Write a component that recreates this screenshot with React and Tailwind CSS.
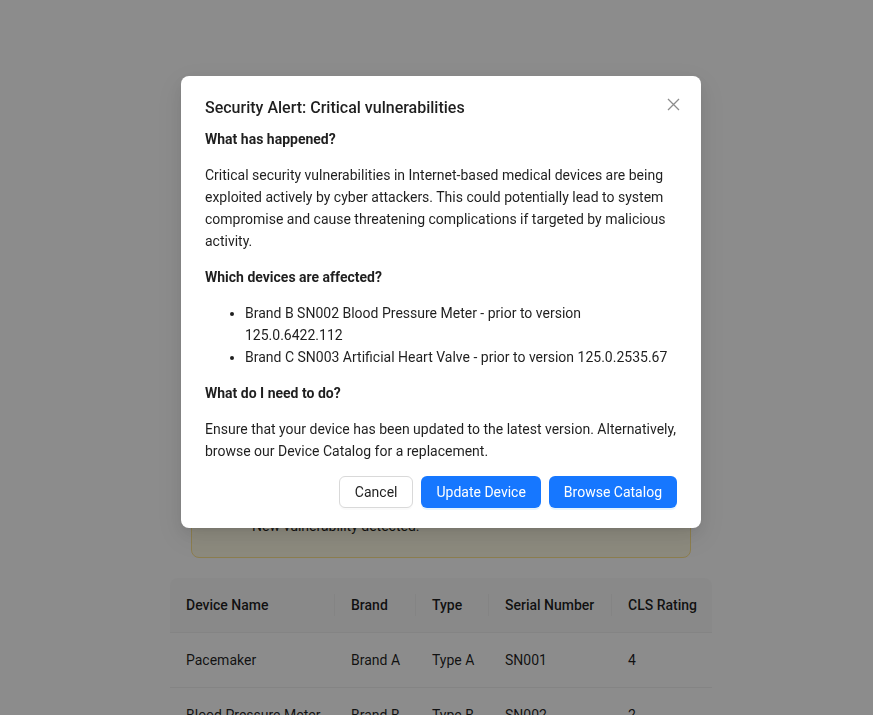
import React from 'react';

const columns = ['Device Name', 'Brand', 'Type', 'Serial Number', 'CLS Rating'];
const colWidths = ['w-[165px]', 'w-[81px]', 'w-[73px]', 'w-[123px]', 'w-[100px]'];

const rows = [
  ['Pacemaker', 'Brand A', 'Type A', 'SN001', '4'],
  ['Blood Pressure Meter', 'Brand B', 'Type B', 'SN002', '2'],
  ['Artificial Heart Valve', 'Brand C', 'Type C', 'SN003', '3'],
];

const font = { fontFamily: '"Segoe UI", Roboto, "Noto Sans", sans-serif' };

const App = () => {
  return (
    <div className="relative h-screen overflow-hidden bg-white text-[14px] leading-[22px] text-black/[0.88]" style={font}>
      {/* Page behind the modal */}
      <div className="ml-[170px] w-[542px] pt-[466px]">
        <div className="mx-[21px] flex gap-3 rounded-lg border border-[#ffe58f] bg-[#fffbe6] px-6 py-5">
          <svg width="24" height="24" viewBox="0 0 24 24" className="mt-0.5 shrink-0 text-[#faad14]" fill="currentColor">
            <circle cx="12" cy="12" r="11" />
            <rect x="11" y="6" width="2" height="8" fill="white" />
            <rect x="11" y="16" width="2" height="2" fill="white" />
          </svg>
          <div>
            <div className="mb-1 text-[16px] leading-6">Security Alert</div>
            <div>New vulnerability detected.</div>
          </div>
        </div>

        <div className="mt-5">
          <div className="flex rounded-t-lg border-b border-[#f0f0f0] bg-[#fafafa] font-medium">
            {columns.map((c, i) => (
              <div key={c} className={`${colWidths[i]} relative shrink-0 whitespace-nowrap p-4`}>
                {c}
                {i < columns.length - 1 && (
                  <span className="absolute right-0 top-1/2 h-[22px] w-px -translate-y-1/2 bg-[#f0f0f0]"></span>
                )}
              </div>
            ))}
          </div>
          {rows.map((r) => (
            <div key={r[0]} className="flex border-b border-[#f0f0f0]">
              {r.map((cell, i) => (
                <div key={i} className={`${colWidths[i]} shrink-0 whitespace-nowrap p-4`}>
                  {cell}
                </div>
              ))}
            </div>
          ))}
        </div>
      </div>

      {/* Mask */}
      <div className="fixed inset-0 bg-black/[0.45]"></div>

      {/* Modal */}
      <div className="fixed left-[181px] top-[76px] w-[520px] rounded-lg bg-white px-6 pb-5 pt-5 shadow-[0_6px_16px_0_rgba(0,0,0,0.08),0_3px_6px_-4px_rgba(0,0,0,0.12),0_9px_28px_8px_rgba(0,0,0,0.05)]">
        <button className="absolute right-[18px] top-[18px] flex h-5 w-5 items-center justify-center text-black/45">
          <svg width="13" height="13" viewBox="0 0 13 13" fill="none" stroke="currentColor" strokeWidth="1.3">
            <path d="M1 1L12 12M12 1L1 12" />
          </svg>
        </button>

        <h2 className="mb-2 text-[16px] font-medium leading-6 text-black/[0.88]">
          Security Alert: Critical vulnerabilities
        </h2>

        <div>
          <p className="mb-[14px] font-bold">What has happened?</p>
          <p className="mb-[14px]">
            Critical security vulnerabilities in Internet-based medical devices are being exploited actively by cyber
            attackers. This could potentially lead to system compromise and cause threatening complications if targeted
            by malicious activity.
          </p>
          <p className="mb-[14px] font-bold">Which devices are affected?</p>
          <ul className="mb-[14px] list-disc pl-10">
            <li>Brand B SN002 Blood Pressure Meter - prior to version 125.0.6422.112</li>
            <li>Brand C SN003 Artificial Heart Valve - prior to version 125.0.2535.67</li>
          </ul>
          <p className="mb-[14px] font-bold">What do I need to do?</p>
          <p>
            Ensure that your device has been updated to the latest version. Alternatively, browse our Device Catalog for
            a replacement.
          </p>
        </div>

        <div className="mt-[14px] flex justify-end gap-2">
          <button className="h-8 rounded-md border border-[#d9d9d9] bg-white px-[15px] shadow-[0_2px_0_rgba(0,0,0,0.02)]">
            Cancel
          </button>
          <button className="h-8 rounded-md bg-[#1677ff] px-[15px] text-white shadow-[0_2px_0_rgba(5,145,255,0.1)]">
            Update Device
          </button>
          <button className="h-8 rounded-md bg-[#1677ff] px-[15px] text-white shadow-[0_2px_0_rgba(5,145,255,0.1)]">
            Browse Catalog
          </button>
        </div>
      </div>
    </div>
  );
};

export default App;
